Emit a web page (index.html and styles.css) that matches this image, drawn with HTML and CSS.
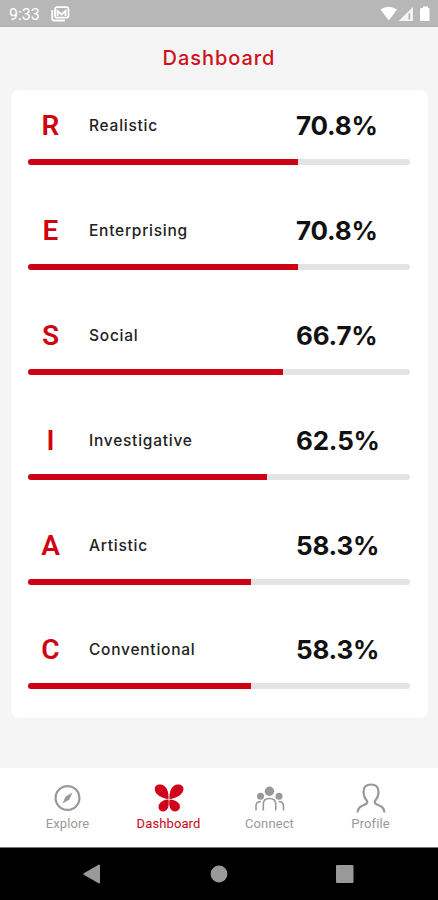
FILE: index.html
```html
<!DOCTYPE html>
<html lang="en">

<head>
  <meta charset="UTF-8">
  <meta name="viewport" content="width=device-width, initial-scale=1.0">
  <title>Dashboard</title>
  <link rel="stylesheet" href="styles.css">
</head>

<body>

  <div class="status">
    <span class="time">9:33</span>
    <svg class="photo" width="19" height="16" viewBox="0 0 19 16" fill="none" stroke="#fff" stroke-width="1.8">
      <rect x="4" y="1.2" width="13.5" height="10.5" rx="2" />
      <path d="M1.200 4v8.500q0 2 2 2H14" />
      <path d="M6.500 10V5l4 3.500 4-3.500v5" />
    </svg>
    <svg class="signal" width="51" height="16" viewBox="0 0 51 16" fill="#fff">
      <path d="M1.500 3.500Q9.500-2 18 3.500L9.800 14.500z" />
      <path d="M34 1v14H19.500z" opacity=".85" />
      <path d="M29.500 7.500h1.700v6h-1.700z" fill="#b5b5b5" />
      <path d="M42 2h2V.5h5V2h.5q1 0 1 1v11q0 1-1 1H42q-1 0-1-1V3q0-1 1-1z" />
    </svg>
  </div>

  <header>
    <h1>Dashboard</h1>
  </header>

  <main>
    <div class="card">
      <div class="row">
        <div class="info"><b>R</b><span class="name">Realistic</span><strong>70.8%</strong></div>
        <div class="bar"><div class="fill" style="width: 70.8%"></div></div>
      </div>
      <div class="row">
        <div class="info"><b>E</b><span class="name">Enterprising</span><strong>70.8%</strong></div>
        <div class="bar"><div class="fill" style="width: 70.8%"></div></div>
      </div>
      <div class="row">
        <div class="info"><b>S</b><span class="name">Social</span><strong>66.7%</strong></div>
        <div class="bar"><div class="fill" style="width: 66.7%"></div></div>
      </div>
      <div class="row">
        <div class="info"><b>I</b><span class="name">Investigative</span><strong>62.5%</strong></div>
        <div class="bar"><div class="fill" style="width: 62.5%"></div></div>
      </div>
      <div class="row">
        <div class="info"><b>A</b><span class="name">Artistic</span><strong>58.3%</strong></div>
        <div class="bar"><div class="fill" style="width: 58.3%"></div></div>
      </div>
      <div class="row">
        <div class="info"><b>C</b><span class="name">Conventional</span><strong>58.3%</strong></div>
        <div class="bar"><div class="fill" style="width: 58.3%"></div></div>
      </div>
    </div>
  </main>

  <nav>
    <a class="tab">
      <svg width="32" height="32" viewBox="0 0 32 32">
        <circle cx="15.500" cy="16" r="11.900" fill="none" stroke="#999" stroke-width="2.200" />
        <path d="M20.500 10.500L17.400 17.400 10.500 21.500 13.600 14.600z" fill="#999" />
      </svg>
      <span>Explore</span>
    </a>
    <a class="tab active">
      <svg width="32" height="32" viewBox="0 0 32 32" fill="#d0021b">
        <path d="M15.500 17C9 16.500 2 12.500 1.800 7.500 1.500 3.500 4.500 2 8 2.500c5.500 1 8 7 7.500 14.500z" />
        <path d="M16.500 17C23 16.500 30.300 12.500 30.500 7.500 30.800 3.500 27.500 2 24 2.500c-5.500 1-8 7-7.500 14.500z" />
        <path d="M15.500 17.500c1 6-.5 11.500-5 12-4.500.3-6-4-4.300-7.200 1.800-3.300 5.300-4.600 9.300-4.800z" />
        <path d="M16.500 17.500c-1 6 .5 11.500 5 12 4.500.3 6.500-4 4.800-7.200-1.800-3.300-5.800-4.600-9.800-4.800z" />
      </svg>
      <span>Dashboard</span>
    </a>
    <a class="tab">
      <svg width="32" height="32" viewBox="0 0 32 32" fill="none" stroke="#999" stroke-width="1.600">
        <g fill="#999" stroke="none">
          <circle cx="15.500" cy="9.300" r="4.700" />
          <circle cx="6.500" cy="14.300" r="3.500" />
          <circle cx="25" cy="14.300" r="3.500" />
        </g>
        <path d="M9.300 28.500V22q0-5.500 6.200-5.500t6.200 5.500v6.500" />
        <path d="M2 28.500V24q0-4.500 5-4.500M29.500 28.500V24q0-4.500-5-4.500" />
      </svg>
      <span>Connect</span>
    </a>
    <a class="tab">
      <svg width="32" height="32" viewBox="0 0 32 32" fill="none" stroke="#999" stroke-width="2.200">
        <path d="M2.500 30.500c.5-5 3.500-6.500 7.500-8 2.500-1 3-2.500 1.500-4.200C9.300 15.700 8.500 13 8.500 10c0-5 2.800-7.500 7.500-7.500s7.500 2.500 7.500 7.500c0 3-.8 5.700-3 8.300-1.500 1.700-1 3.200 1.500 4.200 4 1.500 7 3 7.500 8" />
      </svg>
      <span>Profile</span>
    </a>
  </nav>

  <footer>
    <svg width="18" height="20" viewBox="0 0 18 20" fill="#999"><path d="M.8 9.200L15.500.8q1.500-.6 1.500.8v16.800q0 1.400-1.500.8L.8 10.800q-1-.8 0-1.600z" /></svg>
    <svg width="18" height="18" viewBox="0 0 18 18" fill="#999"><circle cx="9" cy="9" r="8.400" /></svg>
    <svg width="18" height="18" viewBox="0 0 18 18" fill="#999"><rect width="17.500" height="18" rx="1" /></svg>
  </footer>

</body>

</html>
```
FILE: styles.css
```css
* {
  box-sizing: border-box;
}

body {
  margin: 0;
  height: 900px;
  display: flex;
  flex-direction: column;
  background: #f5f5f5;
  font-family: Inter, sans-serif;
  overflow: hidden;
}

.status {
  height: 27px;
  padding: 2px 8px 0 9px;
  display: flex;
  align-items: center;
  background: #b7b7b7;
  border-bottom: 1px solid #adadad;
  color: #fff;
}

.time {
  width: 42px;
  font: 16px Roboto, sans-serif;
}

.signal {
  margin-left: auto;
}

header {
  height: 63px;
  text-align: center;
}

h1 {
  margin: 0;
  font-size: 20px;
  font-weight: 500;
  line-height: 62px;
  letter-spacing: 0.95px;
  color: #d0111b;
}

main {
  flex: 1;
  padding: 0 10px 0 11px;
}

.card {
  height: 628px;
  padding: 20px 18px 0 17px;
  border-radius: 8px;
  background: #fff;
}

.row {
  height: 104.9px;
}

.info {
  height: 49px;
  display: grid;
  grid-template-columns: 45px 223px 1fr;
  align-items: start;
  line-height: 32px;
}

.info b {
  font-family: Roboto, sans-serif;
  font-size: 28px;
  font-weight: 600;
  text-align: center;
  color: #d0040f;
}

.name {
  padding-left: 16px;
  font-size: 15.5px;
  font-weight: 500;
  letter-spacing: 0.75px;
  color: #222;
}

.info strong {
  font-size: 26px;
  font-weight: 700;
  letter-spacing: -0.2px;
  color: #111;
}

.bar {
  height: 6px;
  border-radius: 3px;
  background: #e3e3e3;
  overflow: hidden;
}

.fill {
  height: 100%;
  background: #ce0013;
}

nav {
  height: 79px;
  padding: 0 17px;
  display: flex;
  background: #fff;
}

.tab {
  flex: 1;
  padding-top: 14px;
  display: flex;
  flex-direction: column;
  align-items: center;
  font: 13px/20px Roboto, sans-serif;
  letter-spacing: 0.1px;
  color: #999;
}

.active {
  color: #d0021b;
}

footer {
  height: 53px;
  padding: 0 84px 0 83px;
  display: flex;
  align-items: center;
  justify-content: space-between;
  border-top: 1px solid #777;
  background: #000;
}
```
